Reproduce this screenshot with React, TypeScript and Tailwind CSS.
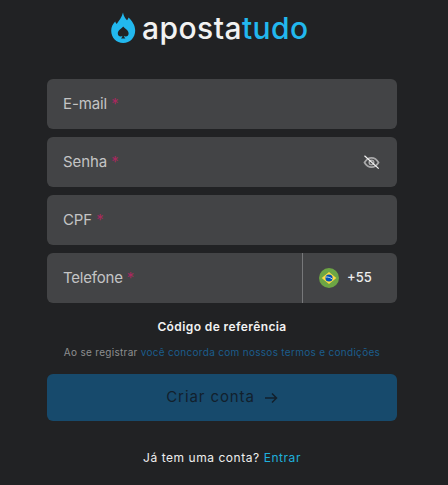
import React from "react";

function Field({ label, children }: { label: string; children?: React.ReactNode }) {
  return (
    <div className="flex h-[50px] items-center justify-between rounded-md bg-[#434446] pl-4 pr-[17px]">
      <span className="text-[15px] tracking-[-0.1px] text-[#c4c4c5]">
        {label} <span className="text-[#a8285f]">*</span>
      </span>
      {children}
    </div>
  );
}

function Flame() {
  return (
    <svg width="25" height="32" viewBox="0 0 25 32" fill="none">
      <path
        fillRule="evenodd"
        clipRule="evenodd"
        fill="#22b8ee"
        d="M12 .5c.6 3.500 2.200 5.700 4 7.800.8-.7 1.300-1.600 1.500-2.800 3.700 3.400 6.700 8 6.700 13 0 7-5.200 12.500-12 12.500S.2 25.500.2 18.700c0-3.700 1.700-6.900 4-9.200.2 1 .7 1.800 1.500 2.500C7.800 8.700 10.800 5.500 12 .5zM12.200 14.600c-1.500 2-5.400 3.700-5.400 6.900 0 1.800 1.300 3 2.900 3 .7 0 1.300-.2 1.800-.7-.2 1.100-.7 1.900-1.500 2.600h4.400c-.8-.7-1.300-1.500-1.500-2.600.5.5 1.100.7 1.800.7 1.600 0 2.900-1.200 2.900-3 0-3.200-3.900-4.900-5.400-6.900z"
      />
    </svg>
  );
}

function BrazilFlag() {
  return (
    <svg width="20" height="20" viewBox="0 0 20 20">
      <circle cx="10" cy="10" r="10" fill="#6da544" />
      <path d="M10 3.900 L17.300 10 L10 16.100 L2.700 10 Z" fill="#ffda44" />
      <circle cx="10" cy="10" r="3.600" fill="#0052b4" />
      <path d="M6.600 9c2.600-.2 5 .6 6.800 2.100" stroke="#f0f0f0" strokeWidth="0.800" fill="none" />
    </svg>
  );
}

export default function App() {
  return (
    <div className="flex h-[485px] w-[448px] flex-col overflow-hidden bg-[#212224] font-['Inter','Noto_Sans',sans-serif]">
      <div className="h-[79px]">
        <div className="ml-[111px] mt-[11px] flex items-center gap-[6px]">
          <Flame />
          <div className="flex pt-[1px] text-[30px] font-medium leading-[32px] tracking-[0.45px]">
            <span className="text-[#f2f2f2]">aposta</span>
            <span className="text-[#22b8ee]">tudo</span>
          </div>
        </div>
      </div>

      <div className="ml-[47px] flex w-[350px] flex-col gap-2">
        <Field label="E-mail" />
        <Field label="Senha">
          <svg width="17" height="15" viewBox="0 0 17 15" fill="none">
            <path
              d="M1.500 7.500C3.300 4.300 5.700 2.800 8.500 2.800s5.200 1.500 7 4.700c-1.800 3.200-4.200 4.700-7 4.700s-5.200-1.500-7-4.700z"
              stroke="#a9a9aa"
              strokeWidth="1.700"
            />
            <circle cx="8.500" cy="7.500" r="2.300" stroke="#a9a9aa" strokeWidth="1.500" />
            <path d="M1.500 .8 L15.700 13.600" stroke="#f5f5f5" strokeWidth="1.200" />
          </svg>
        </Field>
        <Field label="CPF" />
        <div className="flex h-[50px] items-center rounded-md bg-[#434446]">
          <span className="w-[255px] pl-4 text-[15px] tracking-[-0.2px] text-[#c4c4c5]">
            Telefone <span className="text-[#a8285f]">*</span>
          </span>
          <div className="h-full w-px bg-[#77787a]" />
          <div className="flex items-center gap-[8px] pl-4">
            <BrazilFlag />
            <span className="text-[13px] font-medium text-[#eeeeee]">+55</span>
          </div>
        </div>

        <div className="mt-[8px] text-center text-xs font-semibold leading-4 tracking-[0.4px] text-[#f2f2f2]">
          Código de referência
        </div>
        <div className="mt-[3px] text-center text-[10px] leading-3 tracking-[0.3px] text-[#8e8f90]">
          Ao se registrar <span className="text-[#1b5d8c]">você concorda com nossos termos e condições</span>
        </div>
        <button className="mt-[8px] flex h-[47px] items-center justify-center gap-[9px] rounded-md bg-[#174a6c] text-[15px] tracking-[0.9px] text-[#12202c]">
          Criar conta
          <svg width="14" height="12" viewBox="0 0 14 12" fill="none" stroke="#12202c" strokeWidth="1.500">
            <path d="M1 6H12.500M8 1.500 12.500 6 8 10.500" />
          </svg>
        </button>
        <div className="mt-[19px] text-center text-xs leading-5 tracking-[0.55px] text-[#eeeeee]">
          Já tem uma conta? <span className="text-[#1fb0dc]">Entrar</span>
        </div>
      </div>
    </div>
  );
}
